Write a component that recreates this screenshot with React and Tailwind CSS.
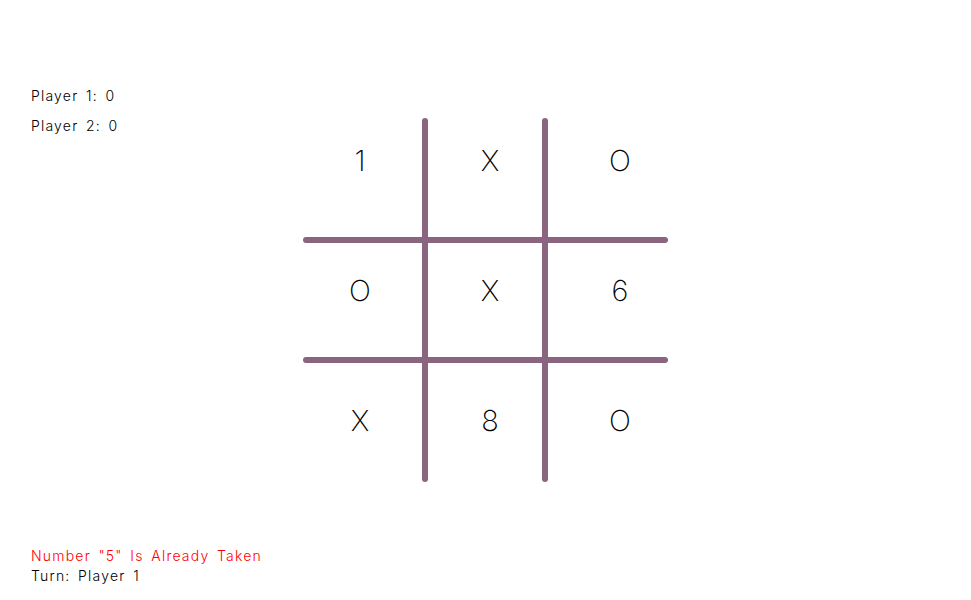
import React from 'react'

const cells = ['1', 'X', 'O', 'O', 'X', '6', 'X', '8', 'O']

function Board() {
  return (
    <div className="relative w-[370px] h-[370px]">
      {/* grid lines */}
      <svg width="370" height="370" viewBox="0 0 370 370" className="block">
        <g stroke="#8b6580" strokeWidth="6" strokeLinecap="round">
          <line x1="125" y1="6" x2="125" y2="364" />
          <line x1="245" y1="6" x2="245" y2="364" />
          <line x1="6" y1="125" x2="365" y2="125" />
          <line x1="6" y1="245" x2="365" y2="245" />
        </g>
      </svg>
      <div className="absolute left-[-5px] top-[-20px] grid grid-cols-[130px_130px_130px] grid-rows-[130px_130px_130px]">
        {cells.map((c, i) => (
          <div key={i} className="flex items-center justify-center text-[29px] font-extralight text-black leading-none">
            {c}
          </div>
        ))}
      </div>
    </div>
  )
}

export default function App() {
  return (
    <div className="w-[971px] h-[600px] bg-white text-black overflow-hidden font-['Inter','Liberation_Sans',sans-serif]">
      <div className="flex flex-col h-full pl-[31px] text-[14px] font-light leading-[18px] tracking-[1.2px] [word-spacing:2.5px]">
        <div className="flex">
          <div className="w-[269px] pt-[87px] flex flex-col gap-[12px]">
            <div>Player 1: 0</div>
            <div>Player 2: 0</div>
          </div>
          <div className="mt-[115px] tracking-normal [word-spacing:normal]">
            <Board />
          </div>
        </div>
        <div className="mt-auto pb-[15px] flex flex-col gap-[2px]">
          <div className="text-[#ff0000]">Number "5" Is Already Taken</div>
          <div>Turn: Player 1</div>
        </div>
      </div>
    </div>
  )
}
